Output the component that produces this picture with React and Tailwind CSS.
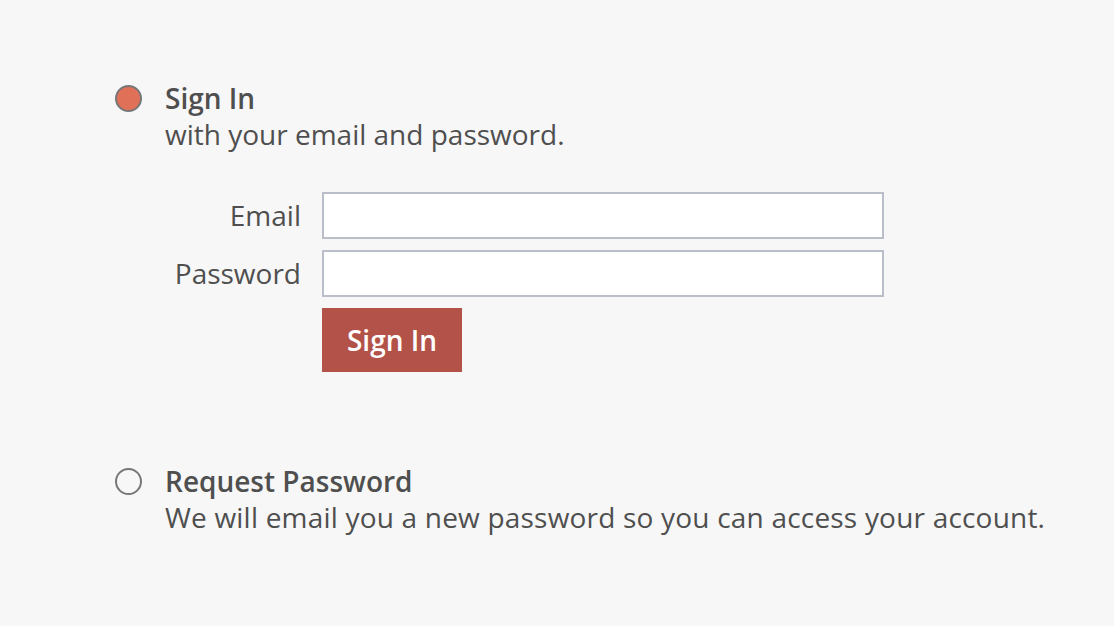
import { useState } from 'react';

function Radio({ checked }) {
  return (
    <span
      className={
        'mt-[5px] block h-[27px] w-[27px] shrink-0 rounded-full border-2 border-[#777777] ' +
        (checked ? 'bg-[#e07058]' : 'bg-[#f7f7f7]')
      }
    />
  );
}

export default function App() {
  const [mode, setMode] = useState('signin');

  return (
    <div
      className="min-h-[626px] w-full bg-[#f7f7f7] pt-[80px] pl-[115px] text-[#4f4f4f]"
      style={{ fontFamily: '"Open Sans", "Noto Sans", sans-serif' }}
    >
      <div className="flex gap-[23px] cursor-pointer" onClick={() => setMode('signin')}>
        <Radio checked={mode === 'signin'} />
        <div>
          <div className="text-[28px] leading-[36px] font-semibold">Sign In</div>
          <div className="text-[28px] leading-[36px]">with your email and password.</div>
        </div>
      </div>

      <form className="mt-[40px] grid grid-cols-[186px_562px] gap-x-[21px] gap-y-[11px] items-center">
        <label className="text-right text-[28px] leading-[47px]">Email</label>
        <input type="email" className="h-[47px] border-2 border-[#b9bec8] bg-white px-3 text-[20px] outline-none" />
        <label className="text-right text-[28px] leading-[47px]">Password</label>
        <input type="password" className="h-[47px] border-2 border-[#b9bec8] bg-white px-3 text-[20px] outline-none" />
        <div />
        <div>
          <button type="button" className="h-[64px] w-[140px] bg-[#b35249] text-[28px] font-semibold text-white">
            Sign In
          </button>
        </div>
      </form>

      <div className="mt-[91px] flex gap-[23px] cursor-pointer" onClick={() => setMode('request')}>
        <Radio checked={mode === 'request'} />
        <div>
          <div className="text-[28px] leading-[36px] font-semibold">Request Password</div>
          <div className="text-[28px] leading-[36px] tracking-[0.2px]">
            We will email you a new password so you can access your account.
          </div>
        </div>
      </div>
    </div>
  );
}
